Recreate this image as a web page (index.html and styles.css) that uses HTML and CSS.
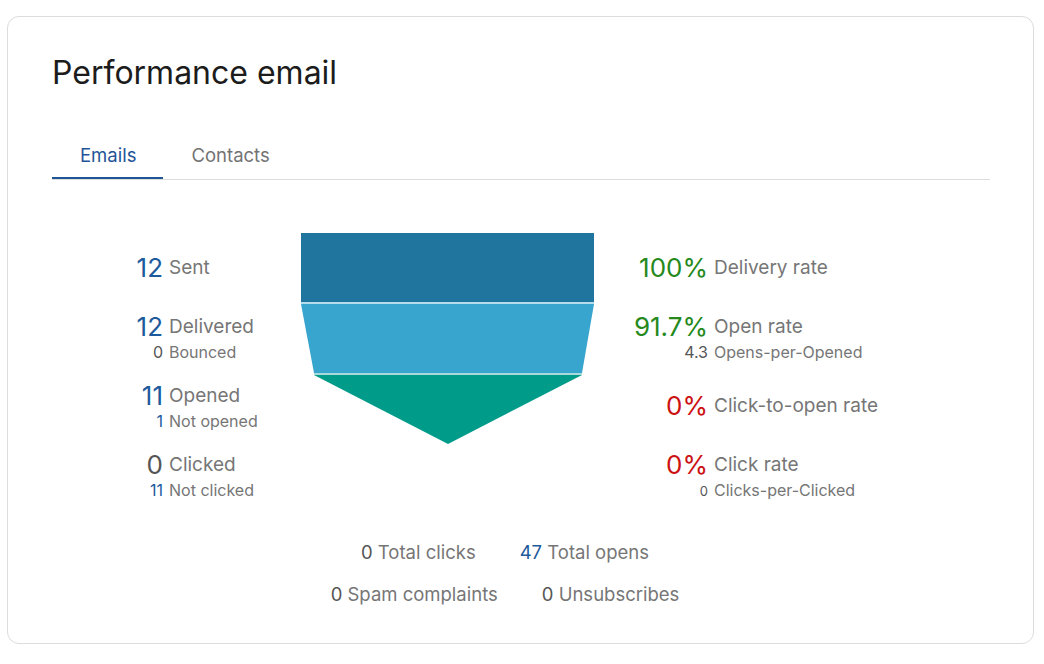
FILE: index.html
```html
<!DOCTYPE html>
<html lang="en">
<head>
<meta charset="utf-8">
<title>Performance email</title>
<link rel="stylesheet" href="styles.css">
</head>
<body>
<div class="page">
  <section class="card">
    <h1 class="title">Performance email</h1>
    <nav class="tabs">
      <span class="tab tab-active">Emails</span>
      <span class="tab">Contacts</span>
    </nav>

    <div class="stats">
      <div class="side side-left">
        <div class="group">
          <div class="row main"><span class="num blue">12</span><span class="lbl">Sent</span></div>
        </div>
        <div class="group">
          <div class="row main"><span class="num blue">12</span><span class="lbl">Delivered</span></div>
          <div class="row sub"><span class="num grey">0</span><span class="lbl">Bounced</span></div>
        </div>
        <div class="group">
          <div class="row main"><span class="num blue">11</span><span class="lbl">Opened</span></div>
          <div class="row sub"><span class="num blue">1</span><span class="lbl">Not opened</span></div>
        </div>
        <div class="group">
          <div class="row main"><span class="num grey">0</span><span class="lbl">Clicked</span></div>
          <div class="row sub"><span class="num blue">11</span><span class="lbl">Not clicked</span></div>
        </div>
      </div>

      <div class="funnel">
        <svg width="293" height="212" viewBox="0 0 293 212" aria-hidden="true">
          <rect x="0" y="0" width="293" height="69" fill="#20759e"/>
          <rect x="0" y="69" width="293" height="2" fill="#b4dcea"/>
          <polygon points="0,71 293,71 281,140 13,140" fill="#38a5ce"/>
          <rect x="13" y="140" width="268" height="2" fill="#a8dadc"/>
          <polygon points="13,142 281,142 147,211" fill="#009b89"/>
        </svg>
      </div>

      <div class="side side-right">
        <div class="group">
          <div class="row main"><span class="num green">100%</span><span class="lbl">Delivery rate</span></div>
        </div>
        <div class="group">
          <div class="row main"><span class="num green">91.7%</span><span class="lbl">Open rate</span></div>
          <div class="row sub"><span class="num grey">4.3</span><span class="lbl">Opens-per-Opened</span></div>
        </div>
        <div class="group">
          <div class="row main"><span class="num red">0%</span><span class="lbl">Click-to-open rate</span></div>
        </div>
        <div class="group">
          <div class="row main"><span class="num red">0%</span><span class="lbl">Click rate</span></div>
          <div class="row sub"><span class="num grey small">0</span><span class="lbl">Clicks-per-Clicked</span></div>
        </div>
      </div>
    </div>

    <div class="totals">
      <div class="totals-row">
        <span class="total"><span class="grey">0</span> Total clicks</span>
        <span class="total"><span class="blue">47</span> Total opens</span>
      </div>
      <div class="totals-row">
        <span class="total"><span class="grey">0</span> Spam complaints</span>
        <span class="total"><span class="grey">0</span> Unsubscribes</span>
      </div>
    </div>
  </section>
</div>
</body>
</html>
```

FILE: styles.css
```css
* { box-sizing: border-box; }

html, body {
  margin: 0;
  padding: 0;
  background: #ffffff;
}

body {
  font-family: Inter, "Noto Sans", "Liberation Sans", sans-serif;
  color: #767676;
}

.page {
  padding: 16px 10px 0 7px;
}

.card {
  border: 1px solid #dcdcdc;
  border-radius: 12px;
  padding: 37px 43px 37px 44px;
  background: #fff;
}

.title {
  margin: 0;
  font-size: 32px;
  line-height: 38px;
  font-weight: 400;
  color: #1c1c1c;
}

.tabs {
  display: flex;
  margin-top: 41px;
  border-bottom: 1px solid #dcdcdc;
}

.tab {
  padding: 10px 27px 10px 28px;
  font-size: 18.5px;
  line-height: 24px;
  color: #737373;
  border-bottom: 2px solid transparent;
}

.tab-active {
  color: #1f5597;
  border-bottom-color: #1f5597;
}

.stats {
  display: flex;
  margin-top: 53px;
}

.side-left {
  margin-left: 71px;
  width: 178px;
}

.funnel {
  width: 293px;
  flex: none;
}

.funnel svg {
  display: block;
}

.group {
  height: 69px;
  display: flex;
  flex-direction: column;
  justify-content: center;
}

.row {
  display: flex;
  align-items: center;
  gap: 6px;
  white-space: nowrap;
}

.row.main { height: 30px; }
.row.sub { height: 21px; }

.side-left .num { width: 40px; }
.side-right .num { width: 114px; }

.num {
  flex: none;
  text-align: right;
}

.main .num { font-size: 26px; }
.main .lbl { font-size: 19px; }
.sub .num { font-size: 16px; }
.sub .num.small { font-size: 13px; padding-top: 3px; }
.sub .lbl { font-size: 16px; }

.blue { color: #1d5a9c; }
.grey { color: #555555; }
.green { color: #25891c; }
.red { color: #cc1111; }

.totals {
  margin-top: 31px;
  padding-right: 32px;
  display: flex;
  flex-direction: column;
  gap: 18px;
}

.totals-row {
  display: flex;
  justify-content: center;
  gap: 44px;
}

.total {
  font-size: 18.5px;
  line-height: 24px;
  white-space: nowrap;
}
```
